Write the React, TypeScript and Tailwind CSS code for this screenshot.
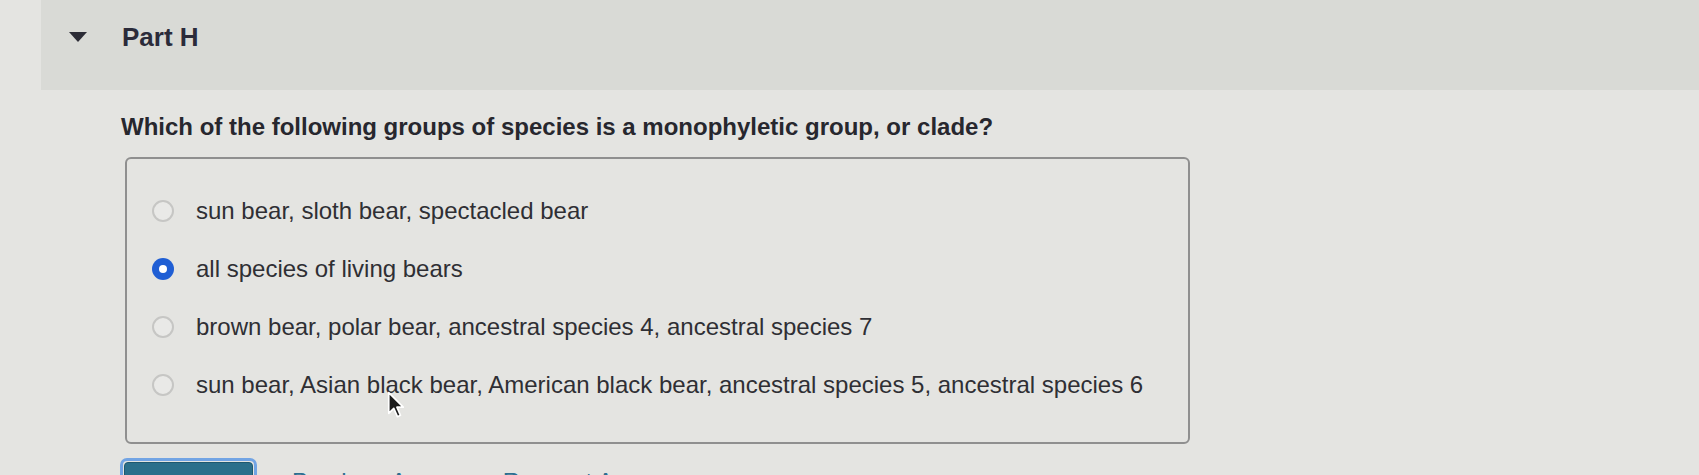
import React from "react";

const options = [
  { label: "sun bear, sloth bear, spectacled bear", checked: false },
  { label: "all species of living bears", checked: true },
  {
    label: "brown bear, polar bear, ancestral species 4, ancestral species 7",
    checked: false,
  },
  {
    label:
      "sun bear, Asian black bear, American black bear, ancestral species 5, ancestral species 6",
    checked: false,
  },
];

const Radio = ({ checked }: { checked: boolean }) => {
  if (checked) {
    return (
      <div className="w-[22px] h-[22px] min-w-[22px] rounded-full bg-[#1f5ed4] flex items-center justify-center">
        <div className="w-[8px] h-[8px] rounded-full bg-white"></div>
      </div>
    );
  }
  return (
    <div className="w-[22px] h-[22px] min-w-[22px] rounded-full border-2 border-[#c6c6c4] bg-[#e9e9e7]"></div>
  );
};

const Cursor = () => (
  <svg
    className="absolute left-[387px] top-[391px]"
    width="18"
    height="29"
    viewBox="0 0 16 26"
  >
    <path
      d="M1.5 1.5 L1.5 20 L6 15.5 L9.3 23 L12 21.8 L8.8 14.5 L14.5 14.5 Z"
      fill="#1b1b1b"
      stroke="#ffffff"
      strokeWidth="1.5"
      strokeLinejoin="round"
    />
  </svg>
);

export default function App() {
  return (
    <main className="relative w-[1699px] h-[475px] overflow-hidden bg-[#e4e4e1] font-['Liberation_Sans',Arial,sans-serif]">
      {/* part header */}
      <div className="ml-[41px] h-[90px] bg-[#d9dad6] pt-[22px] pl-[28px]">
        <div className="flex flex-row items-center gap-[35px] h-[30px]">
          <svg width="18" height="10" viewBox="0 0 18 10">
            <polygon points="0,0 18,0 9,10" fill="#2c2c36" />
          </svg>
          <p className="text-[26px] leading-[30px] font-bold text-[#2b2b3a]">
            Part H
          </p>
        </div>
      </div>

      <div className="pl-[121px] pt-[23px]">
        <p className="text-[24px] leading-[28px] font-bold text-[#27272e]">
          Which of the following groups of species is a monophyletic group, or
          clade?
        </p>

        <div className="mt-[16px] ml-[4px] w-[1065px] h-[287px] border-2 border-[#8f8f8f] rounded-[6px] pt-[23px] pb-[28px] pl-[25px] flex flex-col">
          {options.map((option) => (
            <div
              key={option.label}
              className="flex flex-row items-center gap-[22px] h-[58px]"
            >
              <Radio checked={option.checked} />
              <p className="text-[24px] leading-[28px] text-[#2f2f34]">
                {option.label}
              </p>
            </div>
          ))}
        </div>

        {/* submit row, cut off by the bottom edge of the page */}
        <div className="mt-[14px] -ml-px flex flex-row items-start">
          <div className="w-[137px] h-[44px] rounded-[7px] border-[3px] border-[#72a4e4] p-px">
            <div className="w-full h-full rounded-[4px] bg-[#2b6f8b] border border-[#1e5870]"></div>
          </div>
          <div className="ml-[35px] mt-[10px] flex flex-row gap-[20px] text-[24px] leading-[28px] text-[#2d6f91]">
            <span>Previous Answers</span>
            <span>Request Answer</span>
          </div>
        </div>
      </div>

      <Cursor />
    </main>
  );
}
